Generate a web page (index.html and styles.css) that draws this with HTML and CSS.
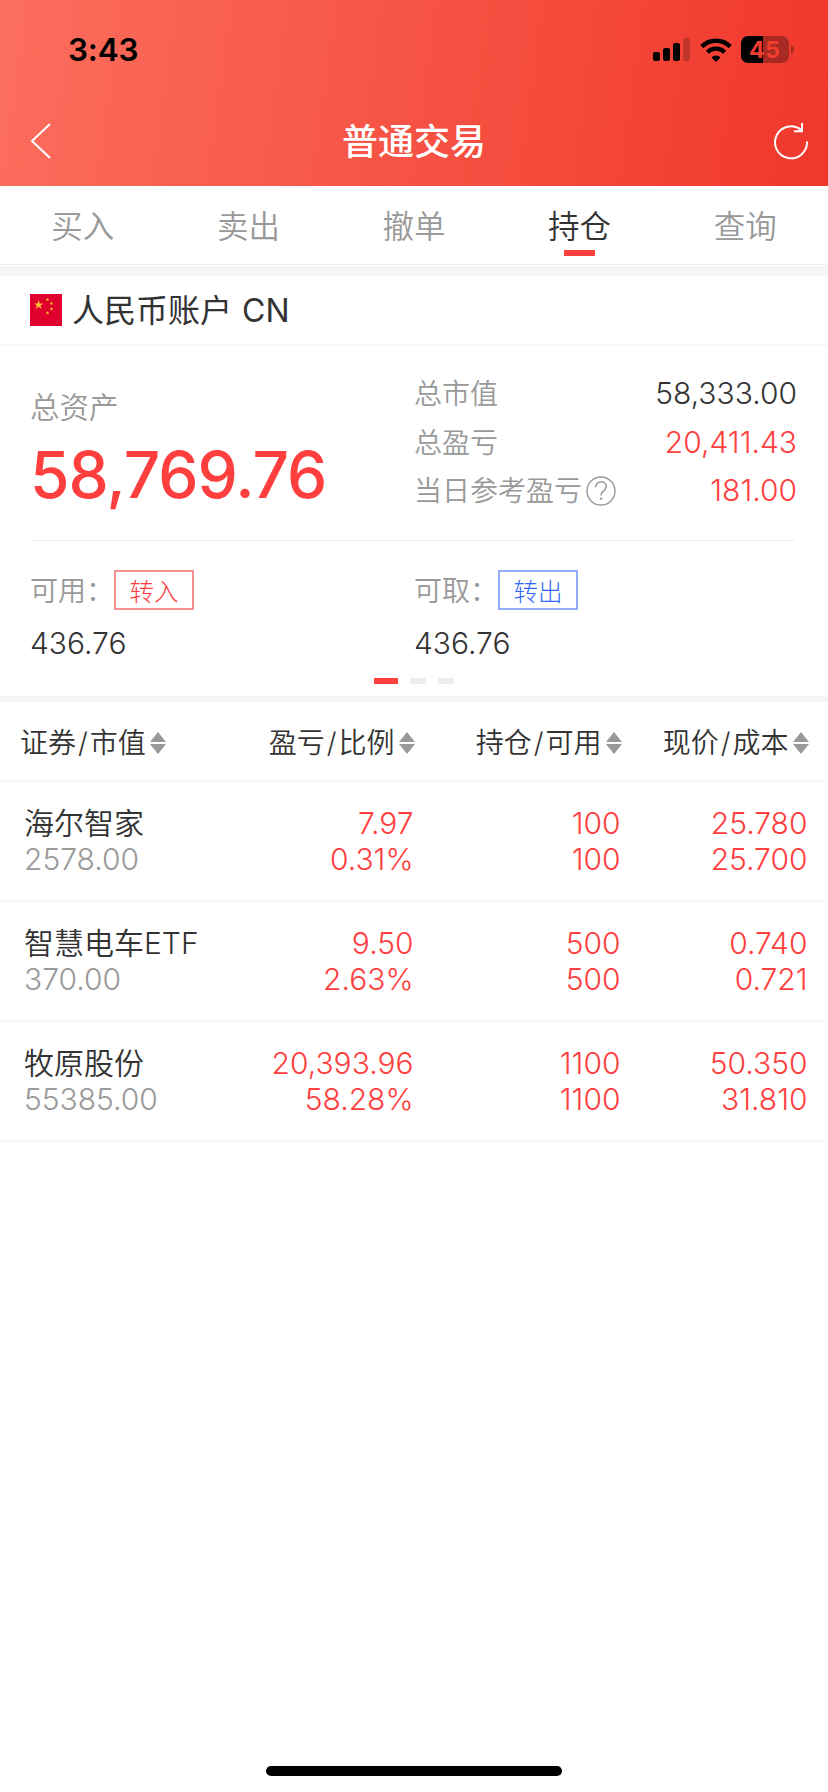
FILE: index.html
```html
<!DOCTYPE html>
<html lang="zh-CN">
<head>
    <meta charset="UTF-8">
    <meta name="viewport" content="width=device-width, initial-scale=1.0">
    <title>普通交易</title>
    <link rel="stylesheet" href="styles.css">
</head>
<body>
    <header class="header">
        <div class="status-bar">
            <span class="time">3:43</span>
            <div class="status-icons">
                <svg class="signal" width="37" height="23" viewBox="0 0 37 23">
                    <rect x="0" y="14" width="7" height="9" rx="2"/>
                    <rect x="10" y="10" width="7" height="13" rx="2"/>
                    <rect x="20" y="5" width="7" height="18" rx="2"/>
                    <rect x="30" y="0" width="7" height="23" rx="2" opacity="0.2"/>
                </svg>
                <svg class="wifi" width="32" height="24" viewBox="0 0 32 24">
                    <path d="M1.8 8.6a20.2 20.2 0 0 1 28.4 0" fill="none" stroke="#000" stroke-width="4.4"/>
                    <path d="M7.4 14.2a12.3 12.3 0 0 1 17.2 0" fill="none" stroke="#000" stroke-width="4.2"/>
                    <path d="M16 24l-4.6-4.6a6.6 6.6 0 0 1 9.2 0z"/>
                </svg>
                <div class="battery"><span>45</span></div>
                <svg class="battery-cap" width="3" height="9" viewBox="0 0 3 9">
                    <path d="M0 0c4 1.5 4 7.5 0 9z"/>
                </svg>
            </div>
        </div>
        <div class="title-bar">
            <svg width="22" height="38" viewBox="0 0 22 38">
                <path d="M20 2L2 19l18 17" fill="none" stroke="#fff" stroke-width="2"/>
            </svg>
            <h1>普通交易</h1>
            <svg width="36" height="38" viewBox="0 0 36 38">
                <path d="M34 19.5A16 16 0 1 1 28 7.8M29 1v8.3h-8" fill="none" stroke="#fff" stroke-width="2"/>
            </svg>
        </div>
    </header>

    <nav class="tabs">
        <a class="tab">买入</a>
        <a class="tab">卖出</a>
        <a class="tab">撤单</a>
        <a class="tab active">持仓</a>
        <a class="tab">查询</a>
    </nav>

    <div class="account">
        <svg width="32" height="32" viewBox="0 0 32 32">
            <rect width="32" height="32" fill="#e0002d"/>
            <g fill="#fdc431">
                <path d="M8.7 6l1.1 3.4h3.5l-2.8 2.1 1.1 3.5-2.9-2.2-2.9 2.2 1.1-3.5-2.8-2.1h3.5z"/>
                <path d="M17.5 3.7l.5 1.2 1.3.1-1 .8.3 1.3-1.1-.7-1.1.7.3-1.3-1-.8 1.3-.1z"/>
                <path d="M21.5 7.5l.5 1.2 1.3.1-1 .8.3 1.3-1.1-.7-1.1.7.3-1.3-1-.8 1.3-.1z"/>
                <path d="M21.5 13l.5 1.2 1.3.1-1 .8.3 1.3-1.1-.7-1.1.7.3-1.3-1-.8 1.3-.1z"/>
                <path d="M17.5 17l.5 1.2 1.3.1-1 .8.3 1.3-1.1-.7-1.1.7.3-1.3-1-.8 1.3-.1z"/>
            </g>
        </svg>
        <span>人民币账户 CN</span>
    </div>

    <section class="summary">
        <div class="assets">
            <div class="total">
                <p class="label">总资产</p>
                <p class="total-value">58,769.76</p>
            </div>
            <dl class="stats">
                <div class="stat"><dt>总市值</dt><dd>58,333.00</dd></div>
                <div class="stat"><dt>总盈亏</dt><dd class="red">20,411.43</dd></div>
                <div class="stat">
                    <dt>当日参考盈亏<svg class="help" width="30" height="30" viewBox="0 0 30 30" fill="none" stroke="#999" stroke-width="1.4">
                        <circle cx="15" cy="15" r="14"/>
                        <path d="M9.8 11.2c0-3.4 2.2-5.4 5.2-5.4s5.2 1.9 5.2 4.8c0 4.2-5.1 4.4-5.1 8.8" stroke-width="1.6"/>
                        <path d="M15.1 21.6v2.2" stroke-width="2"/>
                    </svg></dt>
                    <dd class="red">181.00</dd>
                </div>
            </dl>
        </div>
        <div class="cash">
            <div class="cash-item">
                <div class="cash-head"><span class="cash-label">可用：</span><button class="btn btn-in">转入</button></div>
                <p class="cash-value">436.76</p>
            </div>
            <div class="cash-item">
                <div class="cash-head"><span class="cash-label">可取：</span><button class="btn btn-out">转出</button></div>
                <p class="cash-value">436.76</p>
            </div>
        </div>
        <div class="pager"><i class="on"></i><i></i><i></i></div>
    </section>

    <section class="holdings">
        <div class="row head">
            <div class="col">证券<span class="slash">/</span>市值<i class="sort"></i></div>
            <div class="col">盈亏<span class="slash">/</span>比例<i class="sort"></i></div>
            <div class="col">持仓<span class="slash">/</span>可用<i class="sort"></i></div>
            <div class="col">现价<span class="slash">/</span>成本<i class="sort"></i></div>
        </div>
        <div class="row">
            <div class="name"><p>海尔智家</p><p>2578.00</p></div>
            <div><p>7.97</p><p>0.31%</p></div>
            <div><p>100</p><p>100</p></div>
            <div><p>25.780</p><p>25.700</p></div>
        </div>
        <div class="row">
            <div class="name"><p>智慧电车ETF</p><p>370.00</p></div>
            <div><p>9.50</p><p>2.63%</p></div>
            <div><p>500</p><p>500</p></div>
            <div><p>0.740</p><p>0.721</p></div>
        </div>
        <div class="row">
            <div class="name"><p>牧原股份</p><p>55385.00</p></div>
            <div><p>20,393.96</p><p>58.28%</p></div>
            <div><p>1100</p><p>1100</p></div>
            <div><p>50.350</p><p>31.810</p></div>
        </div>
    </section>

    <div class="home-indicator"></div>
</body>
</html>
```
FILE: styles.css
```css
/* Reset */
* {
    margin: 0;
    padding: 0;
    box-sizing: border-box;
}

body {
    font-family: Inter, "Noto Sans CJK SC", sans-serif;
    font-weight: 300;
    color: #333;
    background: #fff;
    height: 1792px;
    display: flex;
    flex-direction: column;
    overflow: hidden;
}

svg {
    display: block;
    flex-shrink: 0;
}

i {
    display: block;
}

.red {
    color: #ff3e3e;
}

/* Header */
.header {
    height: 186px;
    background: linear-gradient(98deg, #fb6e5d 0%, #f65445 48%, #f0372b 100%);
}

.status-bar {
    height: 98px;
    padding: 1px 34px 0 68px;
    display: flex;
    justify-content: space-between;
    align-items: center;
}

.time {
    font-size: 31.5px;
    font-weight: 600;
    letter-spacing: -0.2px;
    color: #000;
}

.status-icons {
    display: flex;
    align-items: center;
}

.wifi {
    margin: 0 9px 0 10px;
}

.battery {
    width: 48px;
    height: 27px;
    padding-right: 1px;
    border-radius: 7px;
    background: linear-gradient(90deg, #000 22px, #a82a22 22px);
    color: #f13c30;
    font-size: 23.5px;
    font-weight: 700;
    line-height: 27px;
    text-align: center;
}

.battery-cap {
    margin-left: 2px;
    fill: #a82a22;
}

.title-bar {
    height: 86px;
    padding: 0 19px 0 30px;
    display: flex;
    justify-content: space-between;
    align-items: center;
}

h1 {
    padding: 1px 0 0 3px;
    font-size: 36px;
    line-height: 48px;
    font-weight: 500;
    color: #fff;
}

/* Tabs */
.tabs {
    height: 79px;
    display: flex;
    border-bottom: 1px solid #ebebeb;
}

.tab {
    flex: 1;
    display: flex;
    flex-direction: column;
    align-items: center;
    padding-top: 17px;
    font-size: 31.5px;
    font-weight: 350;
    line-height: 47px;
    color: #999;
}

.tab.active {
    color: #333;
}

.tab.active::after {
    content: "";
    width: 31px;
    height: 6px;
    background: #ff3e3e;
}

/* Account */
.account {
    margin-top: 1px;
    height: 80px;
    padding-left: 30px;
    border-top: 10px solid #f5f5f5;
    border-bottom: 2px solid #f7f7f7;
    display: flex;
    align-items: center;
    gap: 10px;
    font-size: 32px;
    font-weight: 400;
}

.account span {
    padding-bottom: 4px;
    word-spacing: 1px;
}

/* Summary */
.summary {
    height: 356px;
    border-bottom: 6px solid #f5f5f5;
}

.assets {
    height: 195px;
    margin: 0 33px;
    border-bottom: 1px solid #eee;
    display: flex;
}

.total {
    width: 381px;
    padding-top: 39px;
    margin-left: -3px;
}

.label {
    font-size: 29.5px;
    font-weight: 350;
    line-height: 44px;
    color: #999;
}

.total-value {
    margin-top: 8px;
    font-size: 64px;
    line-height: 76px;
    font-weight: 500;
    letter-spacing: -1px;
    color: #ff3e3e;
}

.stats {
    flex: 1;
    margin-right: -2px;
    padding-top: 23px;
}

.stat {
    height: 48.5px;
    display: flex;
    justify-content: space-between;
    align-items: center;
}

dt {
    display: flex;
    align-items: center;
    gap: 4px;
    margin-left: 3px;
    padding-top: 2px;
    font-size: 28px;
    font-weight: 350;
    line-height: 40px;
    color: #999;
}

dd {
    font-size: 30px;
}

.cash {
    display: flex;
    padding: 29px 30px 0;
}

.cash-item {
    flex: 1;
}

.cash-head {
    display: flex;
    align-items: center;
    height: 40px;
}

.cash-label {
    width: 84px;
    padding-bottom: 3px;
    font-size: 28px;
    font-weight: 350;
    color: #999;
}

.btn {
    width: 80px;
    height: 40px;
    background: #fff;
    font-family: inherit;
    font-size: 24.5px;
    font-weight: 300;
}

.btn-in {
    color: #ff3e3e;
    border: 2px solid #f59092;
}

.btn-out {
    color: #3368f6;
    border: 2px solid #91adfa;
}

.cash-value {
    margin-top: 15px;
    font-size: 30px;
    line-height: 36px;
}

.pager {
    margin-top: 17px;
    display: flex;
    justify-content: center;
    gap: 12px;
}

.pager i {
    width: 16px;
    height: 6px;
    background: #ededed;
}

.pager .on {
    width: 24px;
    background: #ff3e3e;
}

/* Holdings */
.row {
    height: 120px;
    border-bottom: 2px solid #f7f7f7;
    display: grid;
    grid-template-columns: 206px 207.5px 207px 187px;
    padding-top: 23px;
    font-size: 30px;
    line-height: 36px;
    text-align: right;
    color: #ff3e3e;
}

.row .name {
    padding-left: 24px;
    text-align: left;
    white-space: nowrap;
    color: #999;
}

.name p:first-child {
    color: #333;
    font-weight: 350;
}

.row.head {
    height: 80px;
    padding: 3px 0 0 1px;
    align-items: center;
    color: #333;
    font-size: 28px;
    font-weight: 350;
}

.col {
    display: flex;
    align-items: center;
    justify-content: flex-end;
}

.col:first-child {
    justify-content: flex-start;
    padding-left: 19px;
}

.slash {
    margin: 0 2px;
}

.sort {
    margin-left: 4px;
}

.sort::before,
.sort::after {
    content: "";
    display: block;
    border: 8px solid transparent;
    border-top-width: 0;
    border-bottom: 10px solid #999;
}

.sort::after {
    margin-top: 2px;
    border-top: 10px solid #999;
    border-bottom-width: 0;
}

.home-indicator {
    width: 296px;
    height: 10px;
    margin: auto auto 16px;
    border-radius: 5px;
    background: #000;
}
```
